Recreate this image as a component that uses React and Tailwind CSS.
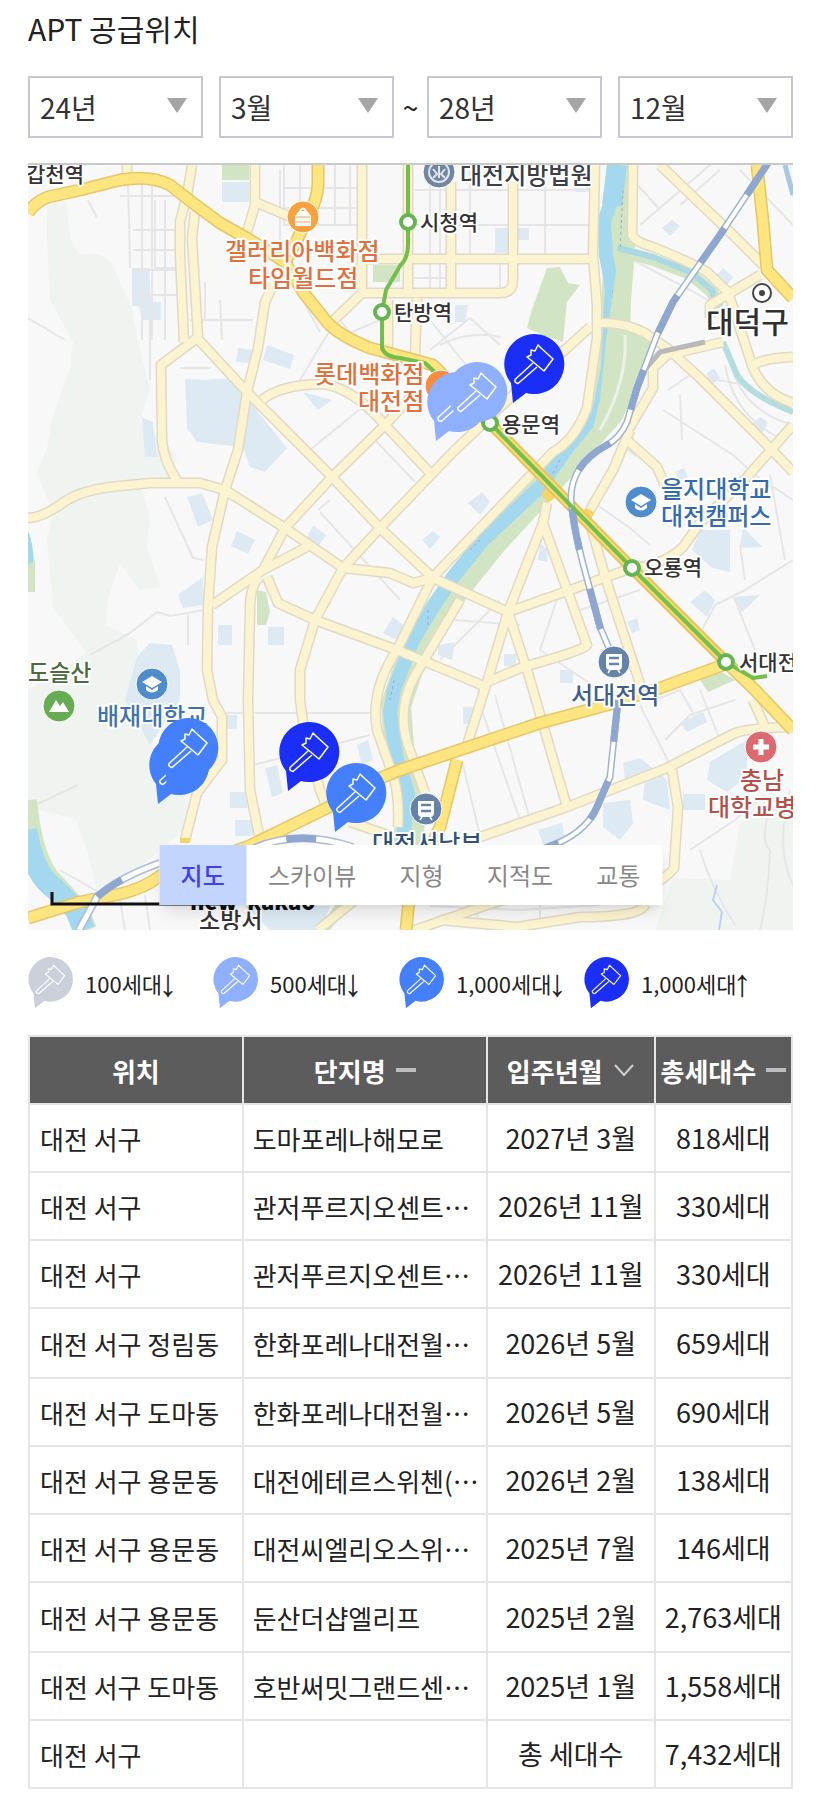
import { useState } from "react";

const FONT = "font-['Noto_Sans_CJK_KR','Liberation_Sans',sans-serif]";

const years = ["24년", "25년", "26년", "27년", "28년"];
const months = Array.from({ length: 12 }, (_, i) => `${i + 1}월`);

const mapTypes = ["지도", "스카이뷰", "지형", "지적도", "교통"];

const legend = [
  { color: "#cbd0da", label: "100세대", arrow: "↓" },
  { color: "#8fb0ff", label: "500세대", arrow: "↓" },
  { color: "#4480fc", label: "1,000세대", arrow: "↓" },
  { color: "#1a2ef8", label: "1,000세대", arrow: "↑" },
];

const rows = [
  ["대전 서구", "도마포레나해모로", "2027년 3월", "818세대"],
  ["대전 서구", "관저푸르지오센트⋯", "2026년 11월", "330세대"],
  ["대전 서구", "관저푸르지오센트⋯", "2026년 11월", "330세대"],
  ["대전 서구 정림동", "한화포레나대전월⋯", "2026년 5월", "659세대"],
  ["대전 서구 도마동", "한화포레나대전월⋯", "2026년 5월", "690세대"],
  ["대전 서구 용문동", "대전에테르스위첸(⋯", "2026년 2월", "138세대"],
  ["대전 서구 용문동", "대전씨엘리오스위⋯", "2025년 7월", "146세대"],
  ["대전 서구 용문동", "둔산더샵엘리프", "2025년 2월", "2,763세대"],
  ["대전 서구 도마동", "호반써밋그랜드센⋯", "2025년 1월", "1,558세대"],
  ["대전 서구", "", "총 세대수", "7,432세대"],
];

// Map geometry. All coordinates share the viewBox of the map svg.
const hills = [
  "M47 202Q58 196 67 202L70 238L80 255Q100 250 112 264L132 308L138 342L150 388L140 422L167 445L177 457L170 480L143 490L150 520L147 547L160 587L140 590L120 563L108 600L106 625L137 640L140 690L153 747L197 820L160 850L118 885L97 890L87 850L76 820L28 807L28 690L87 653L53 607L47 540L53 513L37 473L47 448L52 420L70 368L73 342L50 300L47 240Z",
  "M740 823L764 796L793 805L793 930L655 930L665 900L673 878L730 880Z",
];

const blues = [
  "M222 182h27v20h-27Z",
  "M132 268h17l2 34h10v18h-19l-3-14h-7Z",
  "M185 379L205 380L232 378L247 398L287 448L265 472L250 467L243 447L197 442L187 428Z",
  "M238 348L253 350L253 363L236 362Z",
  "M267 345L294 355L290 369L263 360Z",
  "M142 418L153 422L157 457L145 457Z",
  "M303 392L332 400L318 410Z",
  "M187 497L202 493L213 520L198 527Z",
  "M237 531L255 540L248 554L231 546Z",
  "M313 525L326 535L318 547L306 540Z",
  "M178 595L203 577V605L183 608Z",
  "M218 625h14v20h-14Z",
  "M268 627h16v18h-16Z",
  "M393 617L403 625L397 640L383 633Z",
  "M125 700L137 657L150 643L172 645L180 670V700L150 745Z",
  "M468 503L482 492L490 502L480 515Z",
  "M422 540L433 531L440 537L430 549Z",
  "M692 550L700 530H730V572L712 568Z",
  "M743 527L762 547L740 548Z",
  "M690 602L705 590L715 600L707 617Z",
  "M732 597L760 595L742 612Z",
  "M627 622L637 618L640 630L632 633Z",
  "M438 645L455 642L452 660L438 655Z",
  "M504 654h12v12h-12Z",
  "M560 670h13v13h-13Z",
  "M540 543L548 550L547 562L538 560Z",
  "M680 722L703 712L707 722L687 732Z",
  "M623 763L640 758L667 780L670 810L643 800L645 780L625 780Z",
  "M603 803L630 800L633 823L620 840L603 827Z",
  "M710 762L747 740V777L727 792L707 780Z",
  "M683 794h22v16h-22Z",
  "M538 830L562 823L565 840L545 850Z",
  "M463 707h12v17h-12Z",
  "M265 768L277 765L283 793L272 797Z",
  "M230 792h17v16h-17Z",
  "M235 820h18v16h-18Z",
  "M223 715h14v14h-14Z",
  "M357 745L368 740L373 760L362 765Z",
  "M495 228h14v25h-14Z",
  "M518 228h11v12h-11Z",
  "M455 305h13l-3 17h-10Z",
  "M662 228L672 220L680 226L670 236Z",
  "M717 275L723 268L733 277L727 285Z",
  "M706 374L714 368L720 378L713 384Z",
  "M750 425L760 417L768 422L762 434Z",
  "M575 180h14v12h-14Z",
  "M675 472L684 468L688 477L680 480Z",
  "M625 448L633 442L640 452L635 457Z",
  "M245 906L330 906L322 930H270Z",
];

const greens = [
  "M222 165h27v15h-27Z",
  "M373 265h27v17h-27Z",
  "M547 268L560 267L568 283L580 285L567 302L563 342L545 336L527 328L531 312Z",
  "M257 590L266 592L270 612L266 625H257Z",
  "M28 565L35 560V592H28Z",
  "M700 680L718 670L735 680L708 692Z",
  "M617 265L627 288V325L655 334L636 388L622 420L600 445L587 452L600 400L606 340Z",
  "M335 905H350L330 930H318Z",
];

const streets = [
  "M155 200V268H180M133 230H178M133 250H178M133 270H178M133 295H178M128 180L130 268M142 180V340M152 180V340M165 200V340M120 196H175",
  "M28 318L65 340M88 200L97 218M150 320V380M180 368H210M280 170V240",
  "M284 165V225H360M300 165V225M318 165V225M335 165V225M350 165V225M284 188H360M284 208H360",
  "M415 190H590M415 225H590M430 175V290M440 175V290M410 278H450M470 165V255M500 260V292M545 165V255",
  "M430 350L470 318L500 345M430 320L490 395M440 345Q470 330 500 337",
  "M205 282V320M220 300L222 340M190 320H253M300 295L320 332M330 330L297 385M310 450L365 405M345 335L380 320M340 320L360 345",
  "M165 497L193 558L204 560M320 512L400 600M330 500L318 510M375 440L415 482",
  "M90 655L130 633L157 612L170 616L204 610M188 615V645",
  "M633 260L690 290L708 300M640 225L710 165M660 165L710 215M680 205L720 170M620 165L660 210M740 170L793 225",
  "M663 410L733 455L755 475L793 500M668 390L690 375L745 385M680 395L682 440M730 360Q740 410 793 425M725 365Q735 420 785 440",
  "M703 628L715 605L745 590L793 560M770 475L785 560M735 600L755 650M740 545L745 580M590 500L630 528L650 545",
  "M455 620L520 625M440 660L500 600M560 590L540 650L600 690M580 610L640 590M480 705L520 820M495 695L530 820",
  "M463 765L480 835M640 705L670 765M700 690L720 740M655 700L680 690L700 725M665 740L690 715L735 700M690 850L735 820L765 795",
  "M225 713H378M253 765L370 735M29 808L78 785M60 870L100 893M28 870L73 898M120 900L125 930M145 895L150 930",
  "M700 850Q712 890 735 925M773 800Q758 840 770 850Q768 900 760 930M790 790Q775 850 793 885",
  "M430 906L520 910L600 905M470 890L480 925M540 895V918",
];

const roads = [
  "M127 165V180",
  "M192 165L187 195L180 222V255L184 342",
  "M195 212L192 238L198 337",
  "M197 338L161 365L162 440Q163 460 178 482",
  "M197 338L247 392L307 452L332 477L380 528L433 578",
  "M273 285L265 302L258 348L247 392L238 450L225 490L212 547L208 607L207 670L213 700L222 717V760L197 793L185 840",
  "M28 518Q40 518 60 505Q75 492 110 487L150 483H200L225 490L285 528L343 568L390 573L413 583L433 578",
  "M433 578L508 612L632 568Q665 565 683 547L700 523L747 477L793 425",
  "M262 400Q280 385 320 384Q350 385 385 425L432 475",
  "M212 605L263 570L285 528L332 477L385 425L410 398",
  "M307 547L263 570",
  "M590 327L567 348L513 395L453 452L380 528L343 568L315 620L300 670V700L303 722L320 790L327 808",
  "M260 577Q250 585 250 610L248 700L250 790L260 840",
  "M267 577L278 603L315 620L397 650L477 683Q485 688 487 682",
  "M595 165L593 255L597 305V338L587 408Q575 440 553 452L433 577L397 650Q370 690 377 730L390 767Q400 790 398 827",
  "M460 600L420 667Q395 705 408 745L425 793",
  "M547 503L543 523L508 612L487 682L467 745",
  "M543 523L587 645Q585 650 523 667L487 682",
  "M508 612L528 673L567 807",
  "M590 523L607 583L642 690",
  "M630 430L613 470L590 510",
  "M627 432L653 388V368L667 355L723 342",
  "M600 323Q625 322 645 333L667 348L700 378L770 448L793 472",
  "M633 165L632 235Q635 242 653 247Q690 262 707 272L728 292L753 368Q765 395 793 403",
  "M660 165L733 235L763 265",
  "M760 275L710 305L710 318",
  "M753 365Q765 358 793 357",
  "M367 259H597",
  "M408 165V293M451 182V293M360 293H500Q513 293 513 280V182",
  "M362 165V293L332 322",
  "M417 298L415 355M388 300V350",
  "M255 165V202L293 218M256 202L247 232",
  "M480 837L567 807L667 768L735 733Q750 728 793 727",
  "M672 770L678 807L674 868Q672 873 640 895M645 905Q640 917 580 917L517 927L440 920",
  "M415 930L487 905L520 895",
  "M753 700L765 727",
  "M627 440L657 467L667 490",
  "M350 822L388 835",
  "M318 930L355 900",
];

const highways = [
  "M28 213Q35 202 48 197L80 190L120 180Q150 175 170 185L193 203L220 223L250 240L285 262L303 292L327 322Q338 335 370 348L433 365L490 423",
  "M318 165V185Q317 200 310 212L297 240L285 262",
  "M28 918L80 902L120 894Q145 888 160 876L247 847L327 808L383 777L400 770L540 723L607 705L660 688L726 664",
  "M726 662L753 688L793 730",
  "M457 760L440 827L410 890L406 930",
  "M757 165L763 222L767 270L793 298",
];

const railway =
  "M770 160L720 235L673 302L657 335L637 388L627 422Q620 438 607 445Q570 465 571 500Q574 530 582 560L600 627L614 660M618 700L610 777L597 807Q585 835 545 848";
const southRail = "M79 930L97 897Q118 878 160 863M250 850Q295 828 353 847";

const subway =
  "M408 165V245Q408 258 400 266L386 290L382 312V348Q385 357 400 358L425 363L490 423L632 568L726 662L753 678L767 676";

const stations = [
  [408, 222],
  [382, 312],
  [490, 423],
  [632, 568],
  [726, 662],
];

const labels = [
  { x: 26, y: 182, text: "갑천역", size: 21, color: "#333" },
  { x: 460, y: 184, text: "대전지방법원", size: 24, color: "#3a3f48" },
  { x: 420, y: 230, text: "시청역", size: 21, color: "#333" },
  { x: 394, y: 320, text: "탄방역", size: 21, color: "#333" },
  { x: 502, y: 432, text: "용문역", size: 21, color: "#333" },
  { x: 644, y: 575, text: "오룡역", size: 21, color: "#333" },
  { x: 739, y: 670, text: "서대전", size: 21, color: "#333" },
  { x: 225, y: 260, text: "갤러리아백화점", size: 24, color: "#e2703a" },
  { x: 248, y: 287, text: "타임월드점", size: 24, color: "#e2703a" },
  { x: 314, y: 383, text: "롯데백화점", size: 24, color: "#e2703a" },
  { x: 358, y: 410, text: "대전점", size: 24, color: "#e2703a" },
  { x: 706, y: 333, text: "대덕구", size: 30, color: "#2f2f2f" },
  { x: 661, y: 498, text: "을지대학교", size: 24, color: "#336bb0" },
  { x: 661, y: 525, text: "대전캠퍼스", size: 24, color: "#336bb0" },
  { x: 571, y: 704, text: "서대전역", size: 24, color: "#3d5f8f" },
  { x: 28, y: 681, text: "도슬산", size: 23, color: "#4c6b3f" },
  { x: 97, y: 725, text: "배재대학교", size: 24, color: "#3f74ae" },
  { x: 740, y: 789, text: "충남", size: 24, color: "#b5504c" },
  { x: 708, y: 816, text: "대학교병원", size: 24, color: "#b5504c" },
  { x: 372, y: 852, text: "대전서남부", size: 24, color: "#2f5378" },
  { x: 199, y: 929, text: "소방서", size: 23, color: "#333" },
];

const pins = [
  { x: 457, y: 402, color: "#8fb0ff" },
  { x: 477, y: 392, color: "#8fb0ff" },
  { x: 534, y: 364, color: "#1a2ef8" },
  { x: 179, y: 765, color: "#4480fc" },
  { x: 188, y: 748, color: "#4480fc" },
  { x: 309, y: 752, color: "#1a2ef8" },
  { x: 356, y: 793, color: "#4480fc" },
];

function PinShape({ color }) {
  return (
    <>
      <path d="M-23 19L-21 39L-8 28.900A30 30 0 1 0 -23 19Z" fill={color} />
      <path
        d="M-1 -1L-19 15.500Q-20 18.500 -16 19.500L3 3M-2 -3L-7 -7L-3 -9V-14L1 -13L4 -19L7 -16L19 -5L10 7Z"
        fill="none"
        stroke="#fff"
        strokeWidth="1.500"
        strokeLinejoin="round"
      />
    </>
  );
}

function Badge({ x, y, color, children }) {
  return (
    <g transform={`translate(${x} ${y})`}>
      <circle r="16" fill={color} stroke="#fff" strokeWidth="1" />
      {children}
    </g>
  );
}

function CollegeGlyph() {
  return (
    <path d="M0 -8L10 -2L0 4L-10 -2ZM-6 2V6Q0 11 6 6V2L0 6Z" fill="#fff" />
  );
}

function TrainGlyph({ color }) {
  return (
    <>
      <path d="M-8 -8H8V4Q8 8 4 8H-4Q-8 8 -8 4Z" fill="#fff" />
      <path d="M-5 -4H5M-5 2H5" stroke={color} strokeWidth="2.500" />
      <path d="M-4 8L-6 11M4 8L6 11" stroke="#fff" strokeWidth="1.500" />
    </>
  );
}

function MapCanvas() {
  return (
    <svg viewBox="28 165 765 765" className="block h-auto w-full" role="img" aria-label="아파트 공급위치 지도">
      <rect x="28" y="165" width="765" height="765" fill="#f8f8f8" />
      {hills.map((d, i) => (
        <path key={i} d={d} fill="#eff4f1" />
      ))}
      {blues.map((d, i) => (
        <path key={i} d={d} fill="#dde9f3" />
      ))}
      <g fill="none" strokeLinejoin="round">
        {streets.map((d, i) => (
          <path key={i} d={d} stroke="#e6e6e8" strokeWidth="2" />
        ))}
      </g>

      {/* rivers with their green banks */}
      <g fill="none" strokeLinejoin="round">
        <path
          d="M622 165L620 250L616 300L614 368L602 415L567 460L492 542L460 582L418 640L396 705L400 760L411 800L408 850"
          stroke="#d1e5c4"
          strokeWidth="30"
        />
        <path
          d="M617 165L613 195L604 222L606 255L612 288L610 322L608 368L600 408L567 448L540 487L484 539L453 577L433 607L413 640L394 690L390 713L397 760L408 793L402 850"
          stroke="#a3d8ee"
          strokeWidth="14"
        />
        <path d="M617 165L612 205" stroke="#a3d8ee" strokeWidth="20" />
        <path d="M618 250L653 260L690 274L712 292L718 308" stroke="#d1e5c4" strokeWidth="12" />
        <path d="M618 248L653 257L690 272L712 290L717 308" stroke="#a9d9e4" strokeWidth="6" />
        <path d="M723 342L737 375Q750 395 793 412" stroke="#b4dde0" strokeWidth="6" />
        <path d="M28 800Q34 865 58 885L80 910L88 930" stroke="#d1e5c4" strokeWidth="18" />
        <path d="M26 830Q34 875 54 888L76 910L84 930" stroke="#a3d8ee" strokeWidth="22" />
        <path d="M28 530Q34 545 34 570L28 575Z" fill="#a3d8ee" />
        <path d="M717 885L713 900L722 912L719 930" stroke="#b9d3ee" strokeWidth="2" />
        <path d="M785 165L793 195" stroke="#a9c8e4" strokeWidth="5" />
        <path d="M623 190L620 250M613 290L610 340M618 360L613 400M560 460L552 475M480 540L470 550M428 610V625M394 680L390 700" stroke="#a6a4c4" strokeWidth="1" strokeDasharray="3 3" />
      </g>
      {greens.map((d, i) => (
        <path key={i} d={d} fill="#d1e5c4" />
      ))}
      <path d="M625 335Q628 380 600 430" fill="none" stroke="#eef0ec" strokeWidth="3" />

      {/* roads: casing first, then the surface, so crossings stay open */}
      <g fill="none" strokeLinejoin="round">
        {roads.map((d, i) => (
          <path key={i} d={d} stroke="#e0dac4" strokeWidth="11" />
        ))}
        {roads.map((d, i) => (
          <path key={i} d={d} stroke="#fcf3d0" strokeWidth="8" />
        ))}
        <path d="M705 342L660 352L640 375" stroke="#b9b9b9" strokeWidth="5" />
        {highways.map((d, i) => (
          <path key={i} d={d} stroke="#e6c668" strokeWidth="13" />
        ))}
        {highways.map((d, i) => (
          <path key={i} d={d} stroke="#fde580" strokeWidth="10" />
        ))}
        <path d="M545 490L552 500M590 510L584 522M185 838V843" stroke="#f3d568" strokeWidth="10" />
        <path d="M490 423L632 568L726 662" stroke="#e8c45e" strokeWidth="12" />
        <path d="M490 423L632 568L726 662" stroke="#f5dc74" strokeWidth="8" />
      </g>

      {/* railways */}
      <g fill="none">
        <path d={railway} stroke="#9fb3d3" strokeWidth="7" />
        <path d={railway} stroke="#fff" strokeWidth="4" />
        <path d={railway} stroke="#8ea6d0" strokeWidth="7" strokeDasharray="42 40" />
        <path d={southRail} stroke="#a9bbd6" strokeWidth="8" />
        <path d={southRail} stroke="#fff" strokeWidth="5" />
        <path d={southRail} stroke="#8ea6d0" strokeWidth="7" strokeDasharray="30 45" strokeDashoffset="-38" />
      </g>

      <path d={subway} fill="none" stroke="#74be4c" strokeWidth="4" strokeLinejoin="round" />
      {stations.map(([x, y]) => (
        <circle key={x} cx={x} cy={y} r="7" fill="#fff" stroke="#66b352" strokeWidth="4" />
      ))}

      <Badge x={303} y={217} color="#f9a13c">
        <path d="M-8 9V-1L-4 -6H4L8 -1V9Z" fill="#fff" />
        <path d="M-7 0H7M-7 5H7" stroke="#f9a13c" strokeWidth="1" />
        <path d="M-3 -6Q0 -11 3 -6" fill="none" stroke="#fff" strokeWidth="2" />
      </Badge>
      <Badge x={441} y={386} color="#f98b3c" />
      <Badge x={439} y={172} color="#7286a0">
        <circle r="10" fill="none" stroke="#dfe6ee" strokeWidth="2" />
        <path d="M-6 -3L-2 2L-6 6M6 -3L2 2L6 6M0 -6V6" fill="none" stroke="#dfe6ee" strokeWidth="2" />
      </Badge>
      <Badge x={641} y={502} color="#4f8ccb">
        <CollegeGlyph />
      </Badge>
      <Badge x={152} y={684} color="#4f8ccb">
        <CollegeGlyph />
      </Badge>
      <Badge x={614} y={662} color="#6583a8">
        <TrainGlyph color="#6583a8" />
      </Badge>
      <Badge x={426} y={809} color="#6583a8">
        <TrainGlyph color="#6583a8" />
      </Badge>
      <Badge x={59} y={706} color="#67ab52">
        <path d="M-10 6L-3 -6L1 0L4 -4L10 6Z" fill="#fff" />
      </Badge>
      <Badge x={761} y={747} color="#dc6a70">
        <path d="M-2.500 -8H2.500V-2.500H8V2.500H2.500V8H-2.500V2.500H-8V-2.500H-2.500Z" fill="#fff" />
      </Badge>
      <circle cx="762" cy="293" r="9" fill="#fff" stroke="#444" strokeWidth="2" />
      <circle cx="762" cy="293" r="3" fill="#444" />

      {labels.map(({ x, y, text, size, color }) => (
        <text
          key={`${text}${y}`}
          x={x}
          y={y}
          fontSize={size}
          fontWeight="500"
          fill={color}
          stroke="#fff"
          strokeWidth="4"
          strokeLinejoin="round"
          paintOrder="stroke"
        >
          {text}
        </text>
      ))}

      {/* scale bar */}
      <path d="M52 892V904H230" fill="none" stroke="#111" strokeWidth="3" />
      <text x="190" y="910" fontSize="22" fontWeight="900" fill="#111" xmlSpace="preserve">
        new  kakao
      </text>

      {pins.map((pin) => (
        <g key={`${pin.x}-${pin.y}`} transform={`translate(${pin.x} ${pin.y})`}>
          <PinShape color={pin.color} />
        </g>
      ))}
    </svg>
  );
}

function DateSelect({ label, options, value, onChange }) {
  return (
    <div className="relative min-w-0 flex-1">
      <select
        aria-label={label}
        value={value}
        onChange={(e) => onChange(e.target.value)}
        className="h-[62px] w-full appearance-none border-2 border-[#c5c8d0] bg-white pl-[10px] text-[28px] text-[#333]"
      >
        {options.map((o) => (
          <option key={o}>{o}</option>
        ))}
      </select>
      <svg viewBox="0 0 20 15" className="pointer-events-none absolute top-[22px] right-[16px] h-[15px] w-[20px]" aria-hidden="true">
        <path d="M0 0H20L10 15Z" fill="#a5a5a5" />
      </svg>
    </div>
  );
}

function Dash() {
  return <span className="h-1 w-5 shrink-0 bg-[#bdbdbd]" />;
}

function Chevron() {
  return (
    <svg viewBox="0 0 22 15" className="h-[15px] w-[22px] shrink-0" aria-hidden="true">
      <path d="M2 2L11 12L20 2" fill="none" stroke="#d0d0d0" strokeWidth="2" />
    </svg>
  );
}

export default function App() {
  const [fromYear, setFromYear] = useState("24년");
  const [fromMonth, setFromMonth] = useState("3월");
  const [toYear, setToYear] = useState("28년");
  const [toMonth, setToMonth] = useState("12월");
  const [mapType, setMapType] = useState("지도");

  return (
    <div className={`min-h-screen bg-white pt-[10px] pr-[34px] pb-[22px] pl-7 text-[#222] ${FONT}`}>
      <h1 className="text-[30px] leading-[36px]">APT 공급위치</h1>

      {/* Period filter */}
      <div className="mt-[30px] flex items-center">
        <div className="flex flex-1 gap-4">
          <DateSelect label="시작 년도" options={years} value={fromYear} onChange={setFromYear} />
          <DateSelect label="시작 월" options={months} value={fromMonth} onChange={setFromMonth} />
        </div>
        <span className="w-[33px] text-center text-[28px]">~</span>
        <div className="flex flex-1 gap-4">
          <DateSelect label="종료 년도" options={years} value={toYear} onChange={setToYear} />
          <DateSelect label="종료 월" options={months} value={toMonth} onChange={setToMonth} />
        </div>
      </div>

      {/* Map */}
      <div className="relative mt-[25px] overflow-hidden border-t-2 border-[#c9c9c9]">
        <MapCanvas />
        <div className="absolute bottom-[25px] left-1/2 flex h-[60px] w-[503px] -translate-x-1/2 bg-white shadow-lg">
          {mapTypes.map((type) => (
            <button
              key={type}
              type="button"
              onClick={() => setMapType(type)}
              className={`flex-auto text-[24px] ${
                mapType === type ? "bg-[#c3d5ff] font-medium text-[#3f3ff0]" : "text-[#888]"
              }`}
            >
              {type}
            </button>
          ))}
        </div>
      </div>

      {/* Legend */}
      <ul className="mt-[27px] grid grid-cols-[185px_186px_185px_1fr]">
        {legend.map((item, i) => (
          <li key={i} className="flex items-center">
            <svg viewBox="-30 -30 60 70" className="h-[52px] w-[45px] shrink-0" aria-hidden="true">
              <PinShape color={item.color} />
            </svg>
            <span className="ml-3 text-[22px] whitespace-nowrap">{item.label}</span>
            <span className="-ml-1 font-['Liberation_Sans',sans-serif] text-[38px] leading-[30px]">{item.arrow}</span>
          </li>
        ))}
      </ul>

      {/* Supply list */}
      <table className="mt-[26px] w-full table-fixed border-collapse border-2 border-[#e5e5e5] text-[27px]">
        <colgroup>
          <col className="w-[28%]" />
          <col className="w-[32%]" />
          <col className="w-[22%]" />
          <col />
        </colgroup>
        <thead>
          <tr className="h-[68px] bg-[#5c5c5c] text-[26px] text-white">
            <th className="border-2 border-[#e5e5e5] p-0 text-center">위치</th>
            <th className="border-2 border-[#e5e5e5] p-0">
              <button type="button" className="flex w-full items-center justify-center gap-[10px] font-bold">
                단지명
                <Dash />
              </button>
            </th>
            <th className="border-2 border-[#e5e5e5] p-0">
              <button type="button" className="flex w-full items-center justify-center gap-[10px] font-bold">
                입주년월
                <Chevron />
              </button>
            </th>
            <th className="border-2 border-[#e5e5e5] p-0">
              <button type="button" className="flex w-full items-center justify-center gap-[10px] font-bold whitespace-nowrap">
                총세대수
                <Dash />
              </button>
            </th>
          </tr>
        </thead>
        <tbody>
          {rows.map(([place, name, date, count], i) => (
            <tr key={i} className={i === 3 || i === 7 ? "h-[70px]" : "h-[68px]"}>
              <td className="border-2 border-[#e5e5e5] p-0 pl-[10px] text-[26px] whitespace-nowrap">{place}</td>
              <td className="overflow-hidden border-2 border-[#e5e5e5] p-0 pl-[9px] text-[26px] whitespace-nowrap">{name}</td>
              <td className="border-2 border-[#e5e5e5] p-0 text-center whitespace-nowrap">{date}</td>
              <td className="border-2 border-[#e5e5e5] p-0 text-center whitespace-nowrap">{count}</td>
            </tr>
          ))}
        </tbody>
      </table>
    </div>
  );
}
